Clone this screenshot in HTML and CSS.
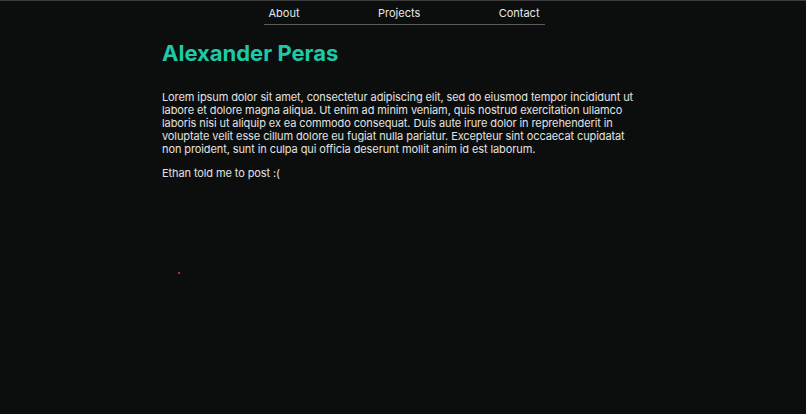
FILE: index.html
```html
<!DOCTYPE html>
<html>
<head>
<meta charset="utf-8">
<link rel="stylesheet" href="styles.css">
</head>
<body>
<nav class="nav">
  <a class="nav-link" href="#">About</a>
  <a class="nav-link" href="#">Projects</a>
  <a class="nav-link" href="#">Contact</a>
</nav>
<main class="main">
  <h1 class="title">Alexander Peras</h1>
  <p class="text">Lorem ipsum dolor sit amet, consectetur adipiscing elit, sed do eiusmod tempor incididunt ut labore et dolore magna aliqua. Ut enim ad minim veniam, quis nostrud exercitation ullamco laboris nisi ut aliquip ex ea commodo consequat. Duis aute irure dolor in reprehenderit in voluptate velit esse cillum dolore eu fugiat nulla pariatur. Excepteur sint occaecat cupidatat non proident, sunt in culpa qui officia deserunt mollit anim id est laborum.</p>
  <p class="text">Ethan told me to post :(</p>
  <span class="dot"></span>
</main>
</body>
</html>
```
FILE: styles.css
```css
html, body {
  margin: 0;
  height: 100%;
}
body {
  background: #0c0e0e;
  border-top: 1px solid #3a3c3d;
  box-sizing: border-box;
  font-family: Inter, "Liberation Sans", sans-serif;
  color: #e2e2e2;
}
.nav {
  width: 281px;
  margin: 0 auto;
  display: flex;
  justify-content: space-between;
  padding: 5px 5px 0;
  box-sizing: border-box;
  height: 24px;
  border-bottom: 1px solid #5a5c5e;
  transform: translateX(1px);
}
.nav-link {
  color: #e8e8e8;
  text-decoration: none;
  font-size: 11px;
  line-height: 14px;
}
.main {
  width: 478px;
  margin: 0 0 0 162px;
  position: relative;
}
.title {
  margin: 15px 0 0;
  font-size: 22px;
  line-height: 27px;
  font-weight: 700;
  color: #1dc9a6;
}
.text {
  margin: 24px 0 0;
  font-size: 11px;
  line-height: 13px;
  letter-spacing: -0.1px;
}
.text + .text {
  margin-top: 11px;
}
.dot {
  position: absolute;
  left: 16px;
  top: 232px;
  width: 2px;
  height: 2px;
  background: #c0242a;
}
```
